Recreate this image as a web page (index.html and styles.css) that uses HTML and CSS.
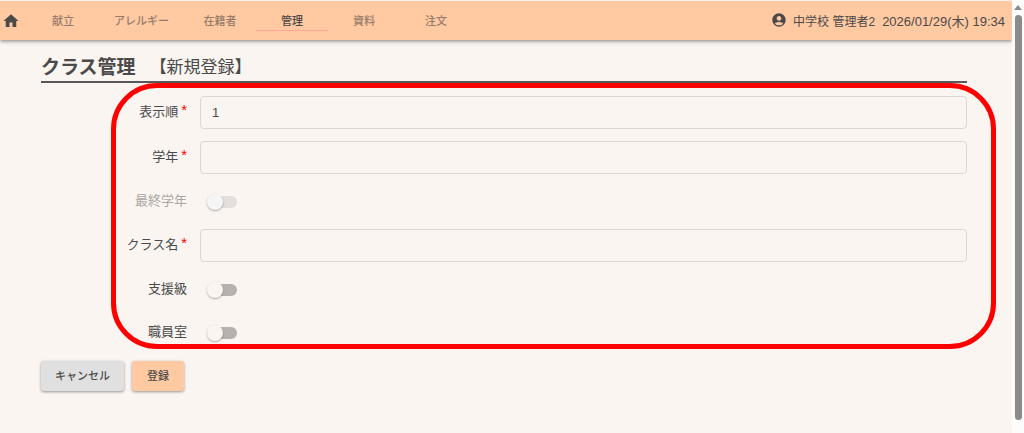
FILE: index.html
```html
<!DOCTYPE html>
<html lang="ja">
<head>
  <meta charset="UTF-8" />
  <meta name="viewport" content="width=device-width, initial-scale=1.0" />
  <title>クラス管理</title>
  <link rel="stylesheet" href="styles.css">
</head>
<body>
  <div class="page">
    <header class="header">
      <a class="home" href="#" aria-label="ホーム">
        <svg width="18" height="18" viewBox="0 0 24 24"><path d="M10 20v-6h4v6h5v-8h3L12 3 2 12h3v8z" /></svg>
      </a>
      <nav class="tabs">
        <a class="tab" href="#">献立</a>
        <a class="tab" href="#">アレルギー</a>
        <a class="tab" href="#">在籍者</a>
        <a class="tab active" href="#">管理</a>
        <a class="tab" href="#">資料</a>
        <a class="tab" href="#">注文</a>
      </nav>
      <div class="user">
        <svg width="16" height="16" viewBox="0 0 24 24"><path d="M12 2C6.48 2 2 6.48 2 12s4.480 10 10 10 10-4.480 10-10S17.520 2 12 2zm0 4c1.930 0 3.500 1.570 3.500 3.500S13.930 13 12 13s-3.500-1.570-3.500-3.500S10.070 6 12 6zm0 14c-2.030 0-4.430-.820-6.140-2.880C7.550 15.800 9.680 15 12 15s4.450.800 6.140 2.120C16.430 19.180 14.030 20 12 20z" /></svg>
        <span class="user-name">中学校 管理者2</span>
        <span class="date">2026/01/29(木) 19:34</span>
      </div>
    </header>

    <main class="content">
      <div class="title">
        <h1>クラス管理</h1>
        <h2>【新規登録】</h2>
      </div>

      <form>
        <div class="fields">
          <div class="form-row">
            <label for="order">表示順<span class="required">*</span></label>
            <input class="text" id="order" type="text" value="1" />
          </div>
          <div class="form-row">
            <label for="grade">学年<span class="required">*</span></label>
            <input class="text" id="grade" type="text" />
          </div>
          <div class="form-row disabled">
            <label for="lastGrade">最終学年</label>
            <input class="switch" id="lastGrade" type="checkbox" disabled />
          </div>
          <div class="form-row">
            <label for="className">クラス名<span class="required">*</span></label>
            <input class="text" id="className" type="text" />
          </div>
          <div class="form-row">
            <label for="support">支援級</label>
            <input class="switch" id="support" type="checkbox" />
          </div>
          <div class="form-row">
            <label for="staff">職員室</label>
            <input class="switch" id="staff" type="checkbox" />
          </div>
          <div class="marker"></div>
        </div>

        <div class="buttons">
          <button class="btn" type="button">キャンセル</button>
          <button class="btn primary" type="button">登録</button>
        </div>
      </form>
    </main>
  </div>

  <div class="scrollbar">
    <div class="arrow"></div>
    <div class="thumb"></div>
  </div>
</body>
</html>
```

FILE: styles.css
```css
* { box-sizing: border-box; }
body {
  display: flex;
  min-height: 100vh;
  margin: 0;
  background: #faf5f1;
  color: #4a4a4a;
  font-family: "Liberation Sans", "Noto Sans CJK JP", sans-serif;
  font-size: 13px;
}
.page { flex: 1; min-width: 0; }

/* ヘッダー */
.header {
  display: flex;
  align-items: center;
  height: 40px;
  padding: 0 7px 0 2px;
  border-top: 1px solid #f3efed;
  background: #ffc9a2;
  box-shadow: 0 1px 4px rgba(0, 0, 0, 0.5);
}
svg { display: block; fill: #4a4a4a; }
.home { margin-right: 7px; }
.tabs { display: flex; flex: 1; }
.tab {
  min-width: 72px;
  height: 20px;
  padding: 0 15px;
  border-bottom: 1px solid transparent;
  color: #957c6a;
  font-size: 11px;
  font-weight: 500;
  line-height: 20px;
  text-align: center;
  text-decoration: none;
}
.tab.active { color: #4a4a4a; border-color: #ffa59a; }
.user { display: flex; align-items: center; padding-bottom: 1px; white-space: nowrap; }
.user-name { margin: 0 7px 0 6px; font-size: 12px; }

/* タイトル */
.content { padding: 12px 45px 24px 41px; }
.title {
  display: flex;
  align-items: center;
  height: 31px;
  margin-bottom: 13px;
  padding-bottom: 2px;
  border-bottom: 2px solid #555a58;
}
.title h1 { margin: 0 14px 0 0; font-size: 19px; }
.title h2 { margin: 0; font-size: 17px; font-weight: normal; }

/* 入力フォーム */
.fields { position: relative; display: flex; flex-direction: column; gap: 12px; }
.form-row { display: flex; align-items: center; gap: 13px; min-height: 31px; }
.form-row label { width: 146px; padding-bottom: 2px; line-height: 20px; text-align: right; }
.form-row.disabled label { color: #aaa6a3; }
.required { margin-left: 3px; color: #f00; font-size: 15px; line-height: 1; vertical-align: 1px; }
.text {
  flex: 1;
  min-width: 0;
  height: 33px;
  padding: 0 11px;
  border: 1px solid #dcd7d4;
  border-radius: 4px;
  background: transparent;
  color: inherit;
  font: inherit;
}
.switch {
  display: flex;
  align-items: center;
  width: 28px;
  height: 12px;
  margin: 0 0 0 9px;
  border-radius: 6px;
  background: #b6b1ae;
  appearance: none;
}
.switch::before {
  content: "";
  flex: none;
  width: 16px;
  height: 16px;
  margin-left: -2px;
  border-radius: 50%;
  background: #faf5f1;
  box-shadow: 0 1px 2px rgba(0, 0, 0, 0.3);
}
.switch:checked::before { margin-left: 14px; }
.switch:disabled { background: #e3dedb; }
.switch:disabled::before { background: #f5f5f5; }

/* 入力範囲の赤枠 */
.marker {
  position: absolute;
  top: -13px;
  right: -29px;
  bottom: -1px;
  left: 70px;
  border: 5px solid #f00;
  border-radius: 46px;
  pointer-events: none;
}

.buttons { display: flex; gap: 8px; margin-top: 13px; }
.btn {
  min-width: 52px;
  height: 30px;
  padding: 0 14px 2px;
  border: 0;
  border-radius: 3px;
  background: #e0e0e0;
  box-shadow: 0 1px 3px rgba(0, 0, 0, 0.4);
  color: #4a4a4a;
  font-family: inherit;
  font-size: 11px;
  font-weight: 500;
  cursor: pointer;
}
.btn.primary { background: #ffc9a2; }

/* スクロールバー */
.scrollbar {
  display: flex;
  flex-direction: column;
  align-items: center;
  gap: 5px;
  width: 12px;
  padding: 5px 0 13px;
  background: #fcfcfc;
}
.arrow { border: 4px solid transparent; border-top: 0; border-bottom: 5px solid #8b8b8b; }
.thumb { flex: 1; width: 7px; border-radius: 4px; background: #8b8b8b; }
```
